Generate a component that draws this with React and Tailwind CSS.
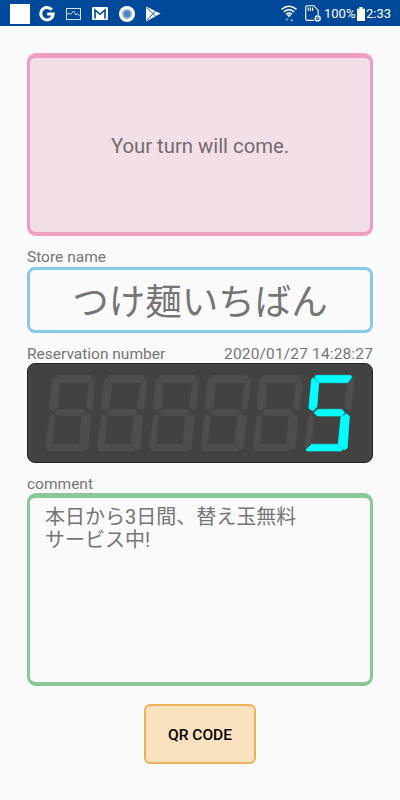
import React from "react";

// outline of each segment, drawn for the rightmost digit
const SEGMENTS = {
    a: "184,61 288,61 292,67 280,83 194,83 181,67",
    f: "177,68 193,84 187,156 175,168 163,160 171,73",
    b: "296,71 280,86 272,157 283,167 290,160 299,73",
    g: "178,173 190,163 262,163 271,173 261,183 189,183",
    e: "172,178 163,184 151,273 156,281 171,267 178,186",
    c: "276,176 285,184 278,279 269,285 251,269 259,186",
    d: "155,283 172,268 248,268 264,284 260,288 157,288",
};

const DIGIT_STEP = 155.4;
const FIVE = ["a", "f", "g", "c", "d"];

const Digit = ({ index, lit = [] }) => (
    <g transform={`translate(${(index - 5) * DIGIT_STEP} 0)`}>
        {Object.entries(SEGMENTS).map(([name, points]) => (
            <polygon
                key={name}
                points={points}
                fill={lit.includes(name) ? "#00ffff" : "#4e4e4e"}
                stroke={lit.includes(name) ? "#00ffff" : "#4e4e4e"}
                strokeWidth="2"
                strokeLinejoin="round"
            />
        ))}
    </g>
);

const StatusBar = () => (
    <header className="h-[26px] shrink-0 bg-[#004899] text-white flex items-center justify-between pl-[10px] pr-[9px]">
        <div className="flex items-center pt-px">
            <div className="w-5 h-5 bg-white"></div>
            <svg className="w-4 h-4 ml-[9px]" viewBox="0 0 16 16" fill="none" stroke="white" strokeWidth="3">
                <path d="M12.8 3.8A6.2 6.2 0 1 0 14.2 8H8.2" />
            </svg>
            <svg className="w-4 h-3 ml-[10px]" viewBox="0 0 16 12" fill="none" stroke="#d3e1f2" strokeWidth="1">
                <rect x="1.5" y="0.5" width="14" height="11" />
                <path d="M2 6.5l2-1.5 1.5 1.5L8.5 3l2.5 4 1.5-1.5L15 8.5" />
            </svg>
            <svg className="w-4 h-[13px] ml-[11px]" viewBox="0 0 16 13">
                <rect width="16" height="13" rx="1.3" fill="white" />
                <path d="M3 11.5V3l5 4.3L13 3v8.5" fill="none" stroke="#004899" strokeWidth="1.6" />
            </svg>
            <svg className="w-4 h-4 ml-[11px]" viewBox="0 0 16 16">
                <circle cx="8" cy="8" r="8" fill="white" />
                <circle cx="8" cy="8" r="5" fill="#90b2d9" />
                <circle cx="8" cy="8" r="3.2" fill="#4f83bd" />
            </svg>
            <svg className="w-4 h-4 ml-[10px]" viewBox="0 0 16 16">
                <path d="M1 0.5L15.5 7.5 1 15.5z" fill="white" />
                <path d="M1.5 1.5l9.5 9M1.5 14.5L11 4.5" stroke="#004899" strokeWidth="0.9" />
            </svg>
        </div>
        <div className="flex items-center pt-px">
            <svg className="w-4 h-[17px]" viewBox="0 0 16 17" fill="none" stroke="white" strokeWidth="1.4">
                <path d="M0.5 4.4Q8-2 15.5 4.4M2.8 6.9Q8 2.6 13.2 6.9M5 9.2Q8 6.6 11 9.2" />
                <path d="M5.5 9.6h5L8 12.2z" fill="white" stroke="none" />
                <path d="M4.2 13.5h3.6L6 16.2zM9 16.2h3.6L10.8 13.5z" fill="#7fa3cc" stroke="none" />
            </svg>
            <svg className="w-4 h-[17px] ml-[8px]" viewBox="0 0 16 17" fill="none" stroke="white" strokeWidth="1.1">
                <path d="M9 15.4H2.3a1.6 1.6 0 0 1-1.6-1.6V1.9A1.2 1.2 0 0 1 1.9.7h7L13.2 5.5V10" />
                <path d="M3.2 2.5V6M5.4 2.5V6M7.6 2.5V6" />
                <circle cx="12.7" cy="13.4" r="2.5" strokeWidth="1.3" />
                <path d="M11.6 12.3l2.2 2.2M13.8 12.3l-2.2 2.2" strokeWidth="0.8" />
            </svg>
            <span className="ml-[3px] w-[33px] text-[13px] leading-none whitespace-nowrap">100%</span>
            <svg className="w-2 h-[14px]" viewBox="0 0 8 14" fill="white">
                <path d="M2.3 0h3.4v1.7H8V14H0V1.7h2.3z" />
            </svg>
            <span className="ml-px w-[25px] text-[13px] leading-none whitespace-nowrap">2:33</span>
        </div>
    </header>
);

const App = () => {
    return (
        <div className="w-[400px] h-[800px] flex flex-col bg-[#fafafa] text-[#757575] font-['Roboto','Noto_Sans_CJK_JP',sans-serif] overflow-hidden">
            <StatusBar />

            <main className="flex flex-col px-[27px] pt-[27px]">
                <section className="h-[183px] flex items-center justify-center rounded-[9px] border-x-[3px] border-t-[5px] border-b-4 border-[#ee9fc1] bg-[#f3dfe7] text-[20.3px] text-[#746a6e] pt-[3px]">
                    Your turn will come.
                </section>

                <h2 className="h-[31px] pt-[12px] text-[15.5px] leading-[18px]">Store name</h2>
                <section className="h-[66px] flex items-center justify-center rounded-[8px] border-3 border-[#87c9e7] pt-[7px] text-[36.5px] leading-none whitespace-nowrap">
                    つけ麺いちばん
                </section>

                <div className="h-[30px] pt-[12px] flex justify-between text-[15.5px] leading-[18px]">
                    <h2>Reservation number</h2>
                    <time className="tracking-[0.15px]">2020/01/27 14:28:27</time>
                </div>
                <section className="h-[100px] rounded-[8px] border border-[#222] bg-[#424242]">
                    <svg className="w-full h-full" viewBox="1 1 344 98">
                        <g transform="translate(227.5 -8) scale(0.33333)">
                            {[0, 1, 2, 3, 4].map((i) => (
                                <Digit key={i} index={i} />
                            ))}
                            <Digit index={5} lit={FIVE} />
                        </g>
                    </svg>
                </section>

                <h2 className="h-[30px] pt-[12px] text-[15.5px] leading-[18px]">comment</h2>
                <section className="h-[193px] rounded-[9px] border-x-[3px] border-t-[5px] border-b-4 border-[#8cc69b] px-[15px] pt-[8px] text-[20px] leading-[23px]">
                    <p>本日から3日間、替え玉無料</p>
                    <p>サービス中!</p>
                </section>

                <button className="self-center w-[112px] h-[60px] mt-[18px] pt-[3px] rounded-[6px] border-2 border-[#e9b456] bg-[#fae2c0] text-[15.5px] font-medium text-black">
                    QR CODE
                </button>
            </main>
        </div>
    );
};

export default App;
